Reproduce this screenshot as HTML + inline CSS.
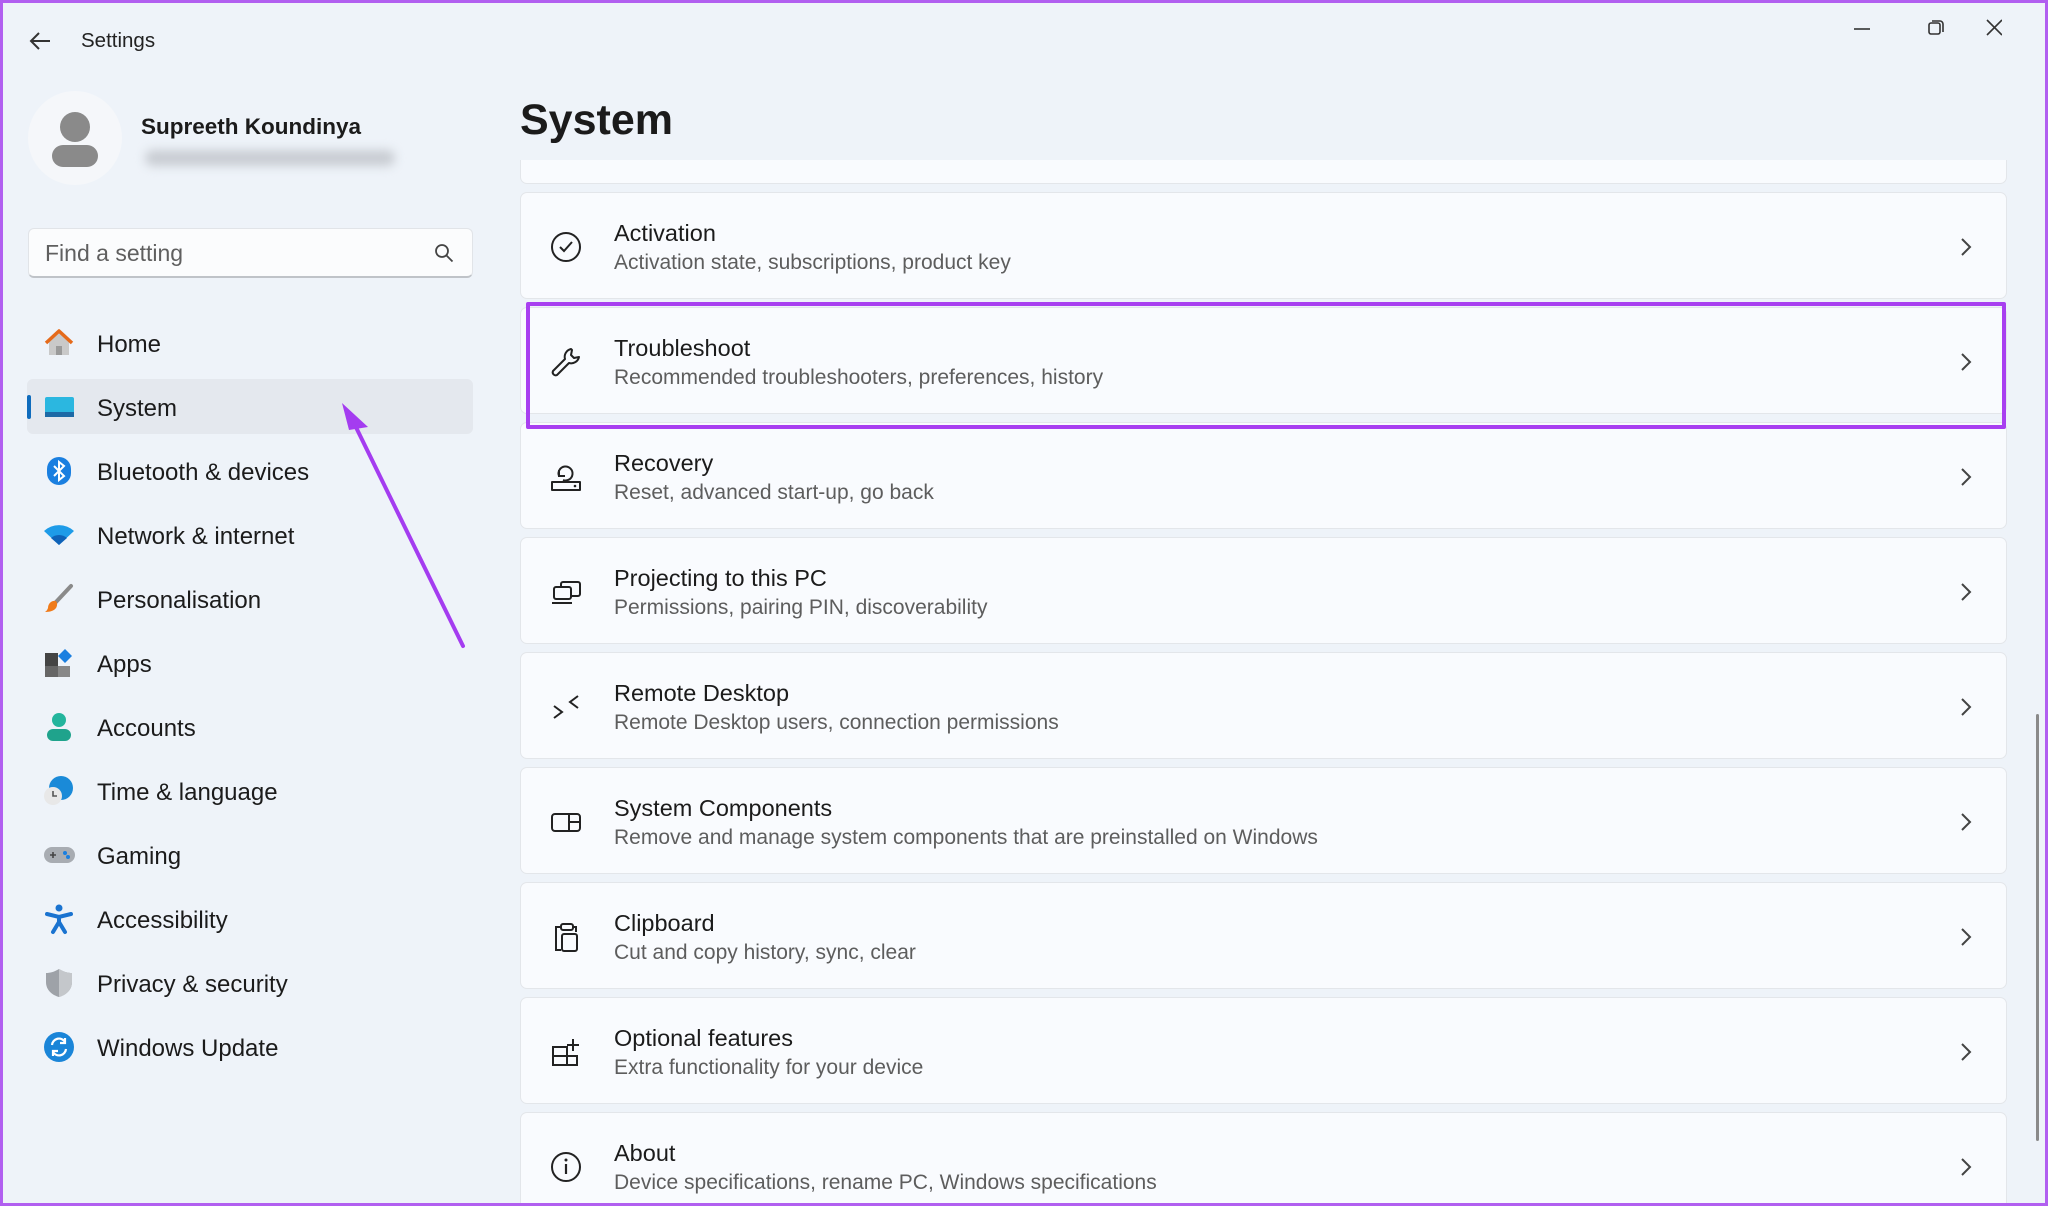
<!DOCTYPE html>
<html><head><meta charset="utf-8"><style>
*{margin:0;padding:0;box-sizing:border-box}
html{width:2048px;height:1206px;overflow:hidden}
body{width:2048px;height:1206px;overflow:hidden;background:#eef3f9;font-family:"Liberation Sans",sans-serif;color:#1b1b1b;position:relative}
.frame{position:absolute;left:0;top:0;width:2048px;height:1206px;border:3px solid #b15ff0;pointer-events:none;z-index:10}
.abs{position:absolute}
.nav{position:absolute;left:97px;font-size:24px;color:#1b1b1b}
.ni{position:absolute;left:43px;width:32px;height:32px}
.card{position:absolute;left:520px;width:1487px;height:107px;background:#f9fbfe;border:1px solid #e3e6ea;border-radius:7px}
.card .t{position:absolute;left:93px;top:27px;font-size:23.5px;color:#1b1b1b}
.card .s{position:absolute;left:93px;top:58px;font-size:21px;color:#5d5d5d}
.card svg.ic{position:absolute;left:28px;top:37px;width:34px;height:34px}
.card svg.ch{position:absolute;left:1438px;top:44px;width:14px;height:20px}
</style></head><body>
<div class="frame"></div>
<svg class="abs" style="left:28px;top:30px" width="24" height="22" viewBox="0 0 24 22"><path d="M22 11H3M11 3L3 11l8 8" fill="none" stroke="#333" stroke-width="2"/></svg>
<div class="abs" style="left:81px;top:29px;font-size:20.5px;color:#222">Settings</div>
<svg class="abs" style="left:1852px;top:18px" width="150" height="22" viewBox="0 0 150 22"><path d="M2 11h16" stroke="#333" stroke-width="1.6"/><rect x="77" y="5" width="11" height="11" rx="2" fill="none" stroke="#333" stroke-width="1.6"/><path d="M80 3h8a3 3 0 0 1 3 3v8" fill="none" stroke="#333" stroke-width="1.6"/><path d="M150 2l-15 15M135 2l15 15" stroke="#333" stroke-width="1.6"/></svg>
<div class="abs" style="left:28px;top:91px;width:94px;height:94px;border-radius:50%;background:#f5f7fa"></div>
<div class="abs" style="left:60px;top:112px;width:30px;height:30px;border-radius:50%;background:#8a8a8a"></div>
<div class="abs" style="left:52px;top:145px;width:46px;height:22px;border-radius:11px;background:#8a8a8a"></div>
<div class="abs" style="left:141px;top:114px;font-size:22.5px;font-weight:bold;color:#1b1b1b">Supreeth Koundinya</div>
<div class="abs" style="left:145px;top:150px;width:250px;height:16px;border-radius:8px;background:#c8ccd2;filter:blur(5px)"></div>
<div class="abs" style="left:28px;top:228px;width:445px;height:50px;background:#fbfcfd;border:1px solid #e1e4e8;border-bottom:2px solid #bfc3c8;border-radius:6px"></div>
<div class="abs" style="left:45px;top:240px;font-size:23px;color:#5f5f5f">Find a setting</div>
<svg class="abs" style="left:434px;top:243px" width="20" height="20" viewBox="0 0 20 20"><circle cx="8" cy="8" r="6" fill="none" stroke="#444" stroke-width="1.8"/><path d="M12.5 12.5l6 6" stroke="#444" stroke-width="1.8"/></svg>
<div class="abs" style="left:27px;top:379px;width:446px;height:55px;background:#e4e8ee;border-radius:6px"></div>
<div class="abs" style="left:27px;top:395px;width:4px;height:24px;background:#0f6cbd;border-radius:2px"></div>
<svg class="ni" style="top:327px" viewBox="0 0 32 32"><path d="M6 15v13h20V15L16 6z" fill="#c9c9c9"/><path d="M3 16L16 4l13 12" fill="none" stroke="#e56a1a" stroke-width="3.5" stroke-linejoin="round"/><rect x="13" y="19" width="6" height="9" fill="#9a9a9a"/></svg>
<div class="nav" style="top:331px">Home</div>
<svg class="ni" style="top:391px" viewBox="0 0 32 32"><rect x="2" y="6" width="29" height="20" rx="2" fill="#2bb7e0"/><rect x="2" y="21" width="29" height="5" fill="#1d6aa6"/></svg>
<div class="nav" style="top:395px">System</div>
<svg class="ni" style="top:455px" viewBox="0 0 32 32"><rect x="4" y="2" width="24" height="28" rx="12" fill="#1a7fe0"/><path d="M11 11l10 10-5 4V7l5 4-10 10" fill="none" stroke="#fff" stroke-width="2"/></svg>
<div class="nav" style="top:459px">Bluetooth &amp; devices</div>
<svg class="ni" style="top:519px" viewBox="0 0 32 32"><path d="M1 12a22 22 0 0 1 30 0L16 26z" fill="#1e9be8"/><path d="M8 19a12 12 0 0 1 16 0L16 26z" fill="#0e62b8"/></svg>
<div class="nav" style="top:523px">Network &amp; internet</div>
<svg class="ni" style="top:583px" viewBox="0 0 32 32"><path d="M28 3L13 19" stroke="#8a8a8a" stroke-width="4" stroke-linecap="round"/><path d="M13 18c-5-1-8 3-8 7-1 3-3 4-3 4 6 0 13-2 12-9z" fill="#f07b1a"/></svg>
<div class="nav" style="top:587px">Personalisation</div>
<svg class="ni" style="top:647px" viewBox="0 0 32 32"><rect x="2" y="6" width="13" height="13" fill="#444"/><rect x="2" y="19" width="13" height="11" fill="#666"/><rect x="15" y="19" width="12" height="11" fill="#888"/><path d="M22 2l7 7-7 7-7-7z" fill="#1a7fe0"/></svg>
<div class="nav" style="top:651px">Apps</div>
<svg class="ni" style="top:711px" viewBox="0 0 32 32"><circle cx="16" cy="9" r="7" fill="#23b59d"/><rect x="4" y="18" width="24" height="12" rx="6" fill="#1fa38c"/></svg>
<div class="nav" style="top:715px">Accounts</div>
<svg class="ni" style="top:775px" viewBox="0 0 32 32"><circle cx="18" cy="13" r="12" fill="#1a8ad8"/><circle cx="10" cy="21" r="9" fill="#e8e8e8"/><path d="M10 16v5h4" fill="none" stroke="#555" stroke-width="1.6"/></svg>
<div class="nav" style="top:779px">Time &amp; language</div>
<svg class="ni" style="top:839px" viewBox="0 0 32 32"><rect x="1" y="8" width="31" height="16" rx="8" fill="#a8acb2"/><path d="M7 16h6M10 13v6" stroke="#444" stroke-width="1.6"/><circle cx="22" cy="14" r="2" fill="#1a7fe0"/><circle cx="25" cy="18" r="2" fill="#1a7fe0"/></svg>
<div class="nav" style="top:843px">Gaming</div>
<svg class="ni" style="top:903px" viewBox="0 0 32 32"><circle cx="16" cy="5" r="3.5" fill="#1a73d0"/><path d="M4 11l12 3 12-3M16 14v5l-6 10M16 19l6 10" fill="none" stroke="#1a73d0" stroke-width="4" stroke-linecap="round"/></svg>
<div class="nav" style="top:907px">Accessibility</div>
<svg class="ni" style="top:967px" viewBox="0 0 32 32"><path d="M16 2c5 3 9 4 13 4v9c0 8-6 13-13 15C9 28 3 23 3 15V6c4 0 8-1 13-4z" fill="#9ea2a8"/><path d="M16 2c5 3 9 4 13 4v9c0 8-6 13-13 15z" fill="#c4c7cb"/></svg>
<div class="nav" style="top:971px">Privacy &amp; security</div>
<svg class="ni" style="top:1031px" viewBox="0 0 32 32"><circle cx="16" cy="16" r="15" fill="#1a85d8"/><path d="M9 14a7 7 0 0 1 13-3M23 18a7 7 0 0 1-13 3" fill="none" stroke="#fff" stroke-width="2.2"/><path d="M22 7v5h-5M10 25v-5h5" fill="none" stroke="#fff" stroke-width="2.2"/></svg>
<div class="nav" style="top:1035px">Windows Update</div>
<svg class="abs" style="left:330px;top:395px" width="150" height="260" viewBox="0 0 150 260"><path d="M133 251L20 20" stroke="#a43cf0" stroke-width="4" stroke-linecap="round"/><path d="M12 8l26 24-19 3z" fill="#a43cf0"/></svg>
<div class="abs" style="left:520px;top:96px;font-size:43px;font-weight:bold;color:#1b1b1b">System</div>
<div class="abs" style="left:520px;top:160px;width:1487px;height:24px;background:#f9fbfe;border:1px solid #e3e6ea;border-top:none;border-radius:0 0 7px 7px"></div>

<div class="card" style="top:192px"><svg class="ic" viewBox="0 0 34 34"><circle cx="17" cy="17" r="14" fill="none" stroke="#222" stroke-width="2"/><path d="M11 17l4 4 8-9" fill="none" stroke="#222" stroke-width="2"/></svg><div class="t">Activation</div><div class="s">Activation state, subscriptions, product key</div><svg class="ch" viewBox="0 0 14 20"><path d="M3 2l8 8-8 8" fill="none" stroke="#444" stroke-width="2"/></svg></div>
<div class="card" style="top:307px"><svg class="ic" viewBox="0 0 34 34"><path d="M22 4a8 8 0 0 0-6 10L4 26a3 3 0 0 0 4 4l12-12a8 8 0 0 0 10-6l-5 1-3-3 1-5z" fill="none" stroke="#222" stroke-width="2" stroke-linejoin="round"/></svg><div class="t">Troubleshoot</div><div class="s">Recommended troubleshooters, preferences, history</div><svg class="ch" viewBox="0 0 14 20"><path d="M3 2l8 8-8 8" fill="none" stroke="#444" stroke-width="2"/></svg></div>
<div class="card" style="top:422px"><svg class="ic" viewBox="0 0 34 34"><path d="M3 22h28v8H3z" fill="none" stroke="#222" stroke-width="2" stroke-linejoin="round"/><path d="M10 16a7 7 0 1 1 4 4M10 10v6h6" fill="none" stroke="#222" stroke-width="2"/><circle cx="26" cy="26" r="1.3" fill="#222"/></svg><div class="t">Recovery</div><div class="s">Reset, advanced start-up, go back</div><svg class="ch" viewBox="0 0 14 20"><path d="M3 2l8 8-8 8" fill="none" stroke="#444" stroke-width="2"/></svg></div>
<div class="card" style="top:537px"><svg class="ic" viewBox="0 0 34 34"><rect x="12" y="7" width="19" height="14" rx="2" fill="none" stroke="#222" stroke-width="2"/><rect x="5" y="12" width="17" height="12" rx="2" fill="#f9fbfe" stroke="#222" stroke-width="2"/><path d="M3 28h20" stroke="#222" stroke-width="2"/></svg><div class="t">Projecting to this PC</div><div class="s">Permissions, pairing PIN, discoverability</div><svg class="ch" viewBox="0 0 14 20"><path d="M3 2l8 8-8 8" fill="none" stroke="#444" stroke-width="2"/></svg></div>
<div class="card" style="top:652px"><svg class="ic" viewBox="0 0 34 34"><path d="M5 16l8 6-8 6M29 6l-8 6 8 6" fill="none" stroke="#222" stroke-width="2"/></svg><div class="t">Remote Desktop</div><div class="s">Remote Desktop users, connection permissions</div><svg class="ch" viewBox="0 0 14 20"><path d="M3 2l8 8-8 8" fill="none" stroke="#444" stroke-width="2"/></svg></div>
<div class="card" style="top:767px"><svg class="ic" viewBox="0 0 34 34"><rect x="3" y="9" width="28" height="17" rx="3" fill="none" stroke="#222" stroke-width="2"/><path d="M20 9v17M20 17h11" stroke="#222" stroke-width="2"/></svg><div class="t">System Components</div><div class="s">Remove and manage system components that are preinstalled on Windows</div><svg class="ch" viewBox="0 0 14 20"><path d="M3 2l8 8-8 8" fill="none" stroke="#444" stroke-width="2"/></svg></div>
<div class="card" style="top:882px"><svg class="ic" viewBox="0 0 34 34"><path d="M11 7H7v23h5" fill="none" stroke="#222" stroke-width="2"/><rect x="12" y="4" width="12" height="6" rx="2" fill="none" stroke="#222" stroke-width="2"/><rect x="13" y="14" width="15" height="17" rx="2" fill="none" stroke="#222" stroke-width="2"/><path d="M24 7h3v5" fill="none" stroke="#222" stroke-width="2"/></svg><div class="t">Clipboard</div><div class="s">Cut and copy history, sync, clear</div><svg class="ch" viewBox="0 0 14 20"><path d="M3 2l8 8-8 8" fill="none" stroke="#444" stroke-width="2"/></svg></div>
<div class="card" style="top:997px"><svg class="ic" viewBox="0 0 34 34"><path d="M4 12h14v18H4zM4 21h24v9H18M18 21V12" fill="none" stroke="#222" stroke-width="2"/><path d="M24 4v12M18 10h12" stroke="#222" stroke-width="2"/></svg><div class="t">Optional features</div><div class="s">Extra functionality for your device</div><svg class="ch" viewBox="0 0 14 20"><path d="M3 2l8 8-8 8" fill="none" stroke="#444" stroke-width="2"/></svg></div>
<div class="card" style="top:1112px;height:94px;border-bottom:none;border-radius:7px 7px 0 0"><svg class="ic" viewBox="0 0 34 34"><circle cx="17" cy="17" r="14" fill="none" stroke="#222" stroke-width="2"/><path d="M17 14v10" stroke="#222" stroke-width="2.2"/><circle cx="17" cy="10" r="1.5" fill="#222"/></svg><div class="t">About</div><div class="s">Device specifications, rename PC, Windows specifications</div><svg class="ch" viewBox="0 0 14 20"><path d="M3 2l8 8-8 8" fill="none" stroke="#444" stroke-width="2"/></svg></div>

<div class="abs" style="left:526px;top:302px;width:1480px;height:127px;border:4px solid #a83ff0;border-radius:2px"></div>
<div class="abs" style="left:2036px;top:714px;width:3px;height:427px;background:#8a8a8a;border-radius:2px"></div>
</body></html>
